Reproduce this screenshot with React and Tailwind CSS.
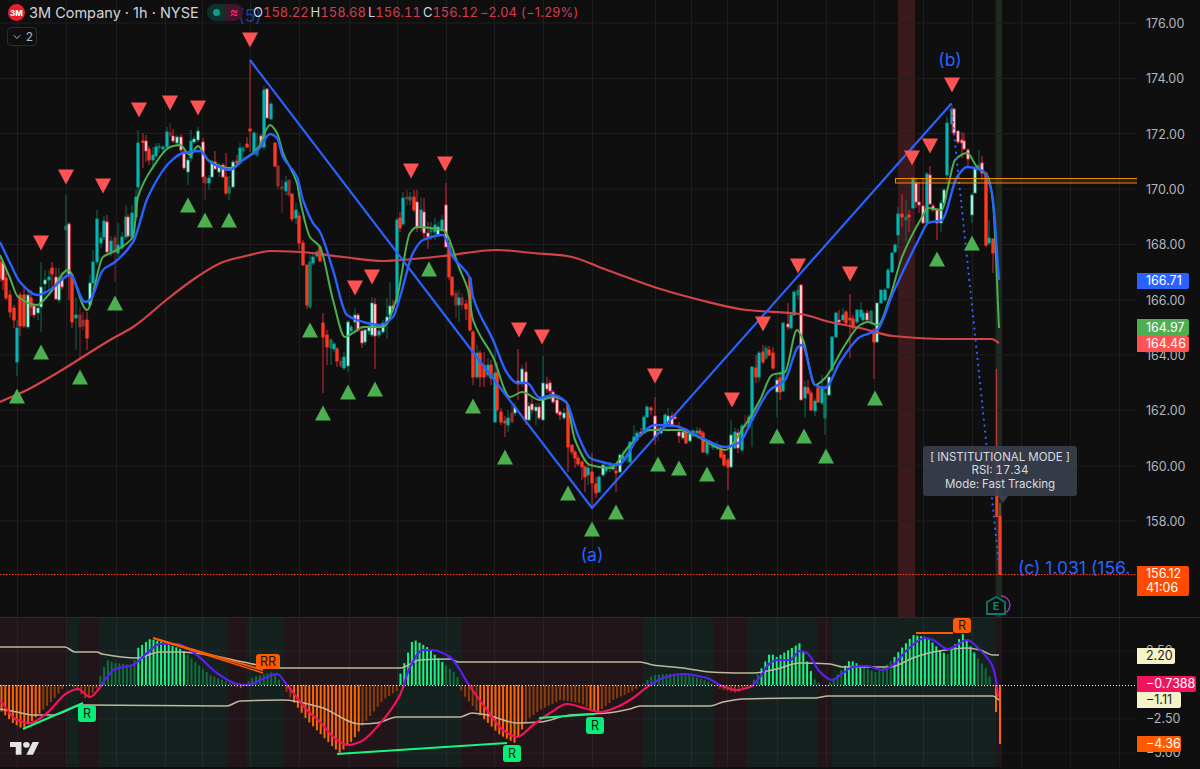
import React from 'react';
import { ChevronDown } from 'lucide-react';

// [x, wickTop, wickBottom, bodyTop, bodyBottom, type]
const candles = [
  [1,258,282,262,278,'r'],[3,260,290,263,280,'w'],[6,270,300,278,298,'r'],[10,290,318,295,312,'r'],[14,305,328,308,320,'r'],
  [17,320,376,328,362,'t'],[20,292,336,295,326,'r'],[24,286,328,295,326,'r'],[28,292,329,295,327,'m'],[31,290,316,298,307,'r'],
  [34,303,318,306,315,'w'],[38,305,320,308,313,'m'],[41,262,332,287,307,'m'],[45,270,296,280,284,'m'],[49,270,290,277,280,'t'],
  [52,262,292,268,274,'r'],[56,268,300,277,299,'w'],[59,268,303,278,300,'m'],[62,272,290,279,287,'w'],[66,195,275,226,230,'g'],
  [69,222,300,224,274,'w'],[72,275,328,275,322,'r'],[76,298,350,315,318,'t'],[80,307,358,315,327,'d'],[83,312,330,320,326,'d'],
  [87,312,350,320,338,'r'],[90,275,307,283,305,'m'],[93,250,290,262,283,'t'],[97,210,265,219,262,'t'],[101,232,248,238,243,'t'],
  [104,216,240,221,237,'t'],[107,215,253,222,252,'w'],[111,236,256,241,252,'t'],[115,235,282,238,252,'d'],[118,223,257,245,253,'t'],
  [122,232,250,237,248,'t'],[126,205,240,217,237,'t'],[128,214,238,217,236,'w'],[132,205,240,213,237,'t'],[136,190,220,197,217,'t'],
  [138,130,197,143,187,'t'],[143,133,168,141,142,'r'],[146,135,162,141,151,'w'],[149,146,165,149,160,'r'],[153,147,170,155,160,'t'],
  [156,143,158,147,156,'t'],[159,143,153,146,148,'g'],[163,145,152,147,149,'t'],[167,127,150,132,147,'t'],[170,123,137,133,135,'d'],
  [173,129,143,136,141,'w'],[177,135,147,137,143,'m'],[181,134,152,137,150,'w'],[184,150,170,152,168,'w'],[188,157,185,160,172,'m'],
  [191,130,162,141,158,'t'],[194,136,144,139,142,'m'],[198,127,142,131,140,'m'],[203,138,183,142,177,'w'],[205,177,200,177,183,'d'],
  [209,175,190,178,183,'t'],[212,160,178,163,177,'m'],[215,151,170,162,169,'w'],[219,163,177,166,172,'m'],[223,163,178,165,177,'w'],
  [226,153,195,177,193,'r'],[229,176,200,187,193,'g'],[233,160,188,162,187,'m'],[237,155,164,161,163,'r'],[240,143,164,148,163,'t'],
  [243,146,160,148,151,'g'],[247,137,148,144,147,'r'],[250,60,152,129,131,'r'],[254,131,154,133,154,'t'],[257,133,157,148,155,'g'],
  [261,134,148,136,147,'w'],[264,86,150,90,147,'t'],[267,88,118,89,118,'w'],[271,102,120,104,119,'t'],[275,143,167,143,166,'r'],
  [278,166,190,166,186,'d'],[282,180,213,187,189,'d'],[286,176,195,182,191,'t'],[289,180,197,180,195,'d'],[292,194,222,194,219,'r'],
  [296,203,224,210,218,'t'],[299,212,250,216,243,'r'],[303,240,266,243,265,'r'],[307,265,309,265,305,'r'],[310,255,309,262,307,'g'],
  [313,252,265,257,263,'t'],[317,250,258,252,256,'t'],[320,245,262,247,261,'r'],[323,313,393,323,337,'r'],[327,330,365,335,347,'r'],
  [331,338,365,340,348,'g'],[334,342,352,344,349,'t'],[337,347,367,349,361,'r'],[341,358,368,361,366,'d'],[344,352,370,357,368,'t'],
  [348,320,372,322,366,'m'],[351,325,334,327,331,'t'],[355,308,330,315,322,'m'],[358,313,332,315,330,'w'],[362,327,348,331,343,'w'],
  [365,328,345,330,342,'m'],[369,322,335,327,331,'m'],[372,297,337,303,335,'m'],[375,298,369,304,336,'w'],[379,325,338,331,335,'t'],
  [383,320,334,323,332,'m'],[387,298,339,317,323,'m'],[390,282,317,306,315,'m'],[393,300,312,306,309,'w'],[397,218,304,220,303,'t'],
  [400,212,232,218,228,'r'],[403,192,226,198,224,'t'],[407,190,205,197,199,'d'],[410,192,205,197,200,'g'],[414,190,212,197,210,'r'],
  [417,190,232,202,228,'w'],[421,197,232,210,227,'t'],[424,198,238,212,233,'w'],[428,222,249,233,237,'w'],[431,222,240,228,232,'g'],
  [435,218,240,225,232,'t'],[438,222,237,227,235,'m'],[442,215,232,220,230,'t'],[446,183,247,205,247,'w'],[449,243,280,243,277,'r'],
  [452,277,297,277,295,'r'],[456,290,318,293,305,'d'],[459,290,322,298,305,'t'],[462,293,310,298,305,'d'],[466,300,320,304,309,'r'],
  [470,278,332,278,330,'r'],[473,330,385,332,377,'r'],[477,345,379,353,377,'t'],[480,350,387,353,377,'r'],[484,352,387,365,377,'r'],
  [488,358,378,365,375,'t'],[491,360,385,365,378,'r'],[495,350,423,373,422,'t'],[497,362,412,373,410,'r'],[501,408,425,412,422,'r'],
  [505,416,437,421,423,'r'],[508,410,432,418,425,'t'],[512,405,423,413,422,'d'],[515,403,416,407,413,'m'],[518,349,400,381,384,'w'],
  [522,365,387,369,383,'m'],[526,362,425,372,420,'w'],[529,402,421,406,420,'m'],[532,396,414,404,410,'w'],[536,403,425,407,411,'m'],
  [539,403,420,407,418,'w'],[543,356,420,383,420,'m'],[547,377,393,384,389,'w'],[550,380,400,383,391,'w'],[553,390,404,392,402,'w'],
  [557,398,415,400,413,'w'],[560,410,420,412,415,'w'],[564,408,420,413,418,'m'],[568,405,472,405,447,'r'],[572,445,455,445,452,'r'],
  [575,450,468,452,458,'r'],[578,455,466,458,464,'r'],[582,460,480,462,467,'r'],[585,465,492,467,477,'r'],[588,463,485,468,475,'t'],
  [592,453,508,472,483,'r'],[596,477,498,484,493,'r'],[599,475,493,477,492,'t'],[603,462,477,465,475,'m'],[606,464,474,467,471,'t'],
  [610,462,472,465,468,'g'],[613,464,471,466,469,'m'],[616,465,492,471,473,'r'],[620,453,473,455,472,'m'],[623,450,462,456,459,'t'],
  [627,448,463,454,457,'g'],[630,442,463,442,462,'t'],[634,425,443,437,442,'t'],[637,430,442,433,440,'t'],[641,428,437,432,435,'w'],
  [644,415,434,417,433,'t'],[647,405,418,407,417,'t'],[651,406,415,408,410,'r'],[655,397,445,416,437,'w'],[658,425,441,428,430,'d'],
  [661,424,435,428,433,'m'],[665,413,430,415,427,'t'],[668,408,425,416,424,'m'],[672,412,426,416,425,'w'],[675,413,420,417,418,'w'],
  [679,422,443,432,436,'w'],[683,428,440,432,438,'m'],[686,428,444,431,443,'r'],[690,432,443,434,441,'m'],[693,429,438,431,435,'t'],
  [697,427,436,431,433,'t'],[700,428,437,431,434,'r'],[703,431,453,433,452,'r'],[707,440,455,443,453,'t'],[710,440,448,443,445,'d'],
  [713,442,450,446,447,'g'],[717,441,450,445,447,'t'],[721,445,459,447,457,'r'],[724,452,467,455,465,'r'],[728,458,490,460,467,'r'],
  [731,420,468,435,467,'m'],[735,428,449,432,448,'t'],[738,429,453,433,448,'w'],[742,424,452,426,450,'t'],[745,415,434,425,427,'d'],
  [749,414,429,417,427,'t'],[752,366,447,367,420,'t'],[756,355,383,368,377,'r'],[759,351,382,353,377,'t'],[763,345,364,352,362,'r'],
  [766,345,360,348,358,'g'],[769,346,356,350,355,'r'],[773,347,370,353,368,'r'],[777,375,417,380,392,'m'],[780,373,400,378,392,'r'],
  [783,323,392,323,391,'t'],[788,303,330,324,327,'w'],[791,312,329,315,328,'t'],[794,290,316,292,315,'t'],[798,285,300,290,295,'g'],
  [801,284,400,285,400,'w'],[805,381,417,387,398,'t'],[808,380,395,388,393,'r'],[811,390,411,393,410,'r'],[815,398,416,401,411,'t'],
  [818,385,403,388,402,'r'],[822,375,405,387,403,'t'],[825,385,435,393,418,'g'],[829,370,396,377,395,'m'],[832,336,372,337,370,'t'],
  [836,312,338,313,337,'t'],[839,310,325,320,322,'w'],[843,308,322,315,320,'t'],[846,310,325,312,323,'r'],[850,294,358,318,320,'r'],
  [853,315,330,319,328,'r'],[857,309,324,310,322,'t'],[861,302,319,310,317,'t'],[863,310,325,313,320,'t'],[867,310,322,313,320,'w'],
  [871,310,325,311,323,'g'],[874,328,379,330,342,'r'],[877,303,343,303,342,'m'],[881,290,304,290,303,'t'],[885,288,302,290,300,'t'],
  [888,268,289,270,288,'t'],[892,252,273,253,272,'t'],[895,243,253,245,252,'t'],[898,207,248,214,235,'t'],[902,194,227,214,217,'r'],
  [906,200,242,217,220,'g'],[909,210,232,215,217,'r'],[913,178,209,178,208,'t'],[916,179,208,183,202,'w'],[919,182,213,202,205,'w'],
  [923,178,224,206,223,'w'],[927,172,224,174,223,'t'],[930,166,205,175,204,'w'],[933,204,212,206,210,'w'],[937,209,240,210,223,'w'],
  [941,200,232,203,223,'m'],[944,188,204,190,203,'m'],[947,117,183,123,175,'t'],[952,105,133,109,124,'t'],[954,108,134,109,133,'w'],
  [958,130,144,131,142,'w'],[962,132,158,140,143,'w'],[964,133,150,141,149,'w'],[968,148,167,150,159,'w'],[972,193,223,195,215,'m'],
  [975,168,194,169,193,'m'],[979,150,170,165,168,'g'],[982,156,180,163,173,'w'],[986,172,247,173,245,'R'],[989,220,245,238,243,'t'],
  [993,238,273,239,253,'r'],
];

const bodyStyle = {
  t: ['#00bcc8', '#0a9a88', '#0d6b55'],
  g: ['#0c7a62', '#0c7a62', '#0d6b55'],
  m: ['#d8fff0', '#0f9a7c', '#0d6b55'],
  r: ['#ff3a22', '#ff3a22', '#d8283c'],
  R: ['#ff3a22', '#ff3a22', '#ff3a22'],
  w: ['#fff0f2', '#f5304c', '#d8283c'],
  d: ['#8f2f2b', '#8f2f2b', '#7a2530'],
};

const blueLine = [[0,242],[10,263],[20,282],[37,295],[50,290],[70,275],[85,302],[90,300],[103,270],[115,262],[133,242],[148,197],[170,162],[183,153],[200,151],[210,162],[230,170],[243,160],[258,150],[270,134],[277,138],[283,157],[297,177],[303,200],[313,223],[320,232],[333,270],[347,315],[367,323],[380,325],[393,317],[400,297],[413,253],[423,240],[443,235],[453,257],[470,278],[473,297],[493,340],[507,373],[517,383],[527,383],[540,398],[553,395],[566,402],[578,435],[590,458],[602,462],[618,465],[640,435],[655,425],[675,426],[700,437],[725,447],[740,442],[752,420],[770,390],[785,380],[798,347],[802,345],[815,385],[825,388],[840,362],[860,337],[877,330],[893,293],[920,237],[928,223],[942,220],[957,177],[967,167],[983,171],[992,193],[999,280]];
const greenLine = [[0,255],[10,278],[18,297],[37,305],[50,293],[68,270],[87,310],[103,257],[113,252],[133,237],[138,197],[153,167],[170,147],[180,145],[190,155],[198,146],[208,160],[230,168],[243,160],[258,148],[270,125],[277,133],[283,153],[297,183],[300,200],[310,237],[320,247],[333,300],[345,337],[353,333],[363,327],[383,327],[397,297],[410,233],[417,227],[443,230],[460,270],[468,290],[473,320],[493,357],[510,397],[522,392],[540,400],[553,397],[566,402],[575,440],[590,465],[610,468],[630,445],[650,430],[680,430],[700,438],[725,450],[745,425],[760,400],[772,375],[785,372],[797,330],[803,340],[815,385],[825,378],[845,345],[860,325],[868,322],[878,325],[890,297],[902,257],[922,217],[928,208],[942,210],[948,187],[955,160],[967,153],[977,167],[988,177],[993,203],[999,328]];
const redLine = [[0,402],[27,390],[57,373],[110,340],[133,327],[170,297],[197,277],[223,262],[250,255],[270,251],[300,252],[343,257],[383,261],[400,260],[443,256],[497,250],[533,253],[567,256],[607,270],[657,288],[700,300],[747,310],[800,314],[830,322],[860,328],[893,336],[943,339],[992,339],[999,343]];

const sells = [[250,40],[139,110],[170,103],[198,108],[66,177],[103,186],[41,243],[411,171],[445,164],[355,288],[372,277],[519,330],[542,337],[655,376],[732,400],[798,266],[763,324],[850,274],[912,158],[930,146],[952,85]];
const buys = [[17,396],[41,352],[80,377],[115,303],[310,330],[188,205],[205,220],[229,220],[429,269],[323,413],[348,392],[375,389],[473,406],[505,457],[568,493],[592,529],[616,512],[658,464],[679,468],[707,474],[728,512],[777,436],[804,436],[826,456],[875,398],[937,259],[972,243]];

const priceGridY = [23,78.5,133.5,189,244.5,300,355,410,466,521];
const gridX = [17,66,116,165,202,250,299,349,397,446,494,543,592,655,691,727,777,826,874,923,972,1021,1070,1119];
const priceTicks = ['176.00','174.00','172.00','170.00','168.00','166.00','164.00','162.00','160.00','158.00'];

// histogram height per x, positive goes up from the zero line
const amp = [[0,-25],[13,-38],[23,-44],[33,-35],[43,-25],[53,-15],[63,-3],[66,0],[70,1],[80,-8],[87,-15],[97,-3],[100,8],[107,25],[115,22],[133,20],[138,37],[150,46],[163,43],[183,35],[193,25],[210,10],[233,1],[240,-4],[253,8],[273,13],[283,0],[287,-8],[307,-35],[333,-62],[340,-68],[353,-55],[363,-40],[383,-15],[398,-5],[400,10],[413,46],[427,38],[440,25],[457,10],[462,-8],[480,-30],[500,-50],[515,-58],[527,-35],[540,-25],[560,-15],[580,-18],[597,-28],[613,-15],[633,-6],[643,1],[653,10],[683,12],[710,3],[720,-4],[737,-8],[750,0],[760,14],[770,32],[777,28],[800,42],[810,16],[815,5],[825,-2],[837,10],[850,25],[860,20],[877,12],[892,25],[900,35],[913,50],[927,48],[940,35],[947,30],[963,51],[977,28],[987,15],[994,-3]];
const brightBars = [[0,42],[136,186],[293,360],[400,445],[480,523],[590,600],[760,812],[843,862],[892,944],[950,976]];

const bandFill = { g: '#14211e', m: '#21151a' };
const lowerBands = [[0,68,'m'],[68,79,'g'],[79,99,'m'],[99,228,'g'],[228,247,'m'],[247,284,'g'],[284,397,'m'],[397,462,'g'],[462,643,'m'],[643,713,'g'],[713,747,'m'],[747,817,'g'],[817,832,'m'],[832,996,'g'],[996,1002,'m']];

const upperBand = [[0,647],[65,647],[75,652],[97,652],[102,654],[137,658],[160,652],[180,652],[215,656],[243,662],[280,668],[400,668],[420,660],[450,659],[458,662],[640,662],[653,665],[683,668],[710,672],[743,673],[753,673],[777,669],[800,663],[830,664],[843,667],[890,667],[913,658],[933,652],[967,648],[980,650],[993,655],[999,655]];
const lowerBand = [[0,709],[17,712],[33,715],[53,715],[83,705],[227,706],[240,701],[283,700],[320,707],[360,724],[377,723],[397,717],[460,717],[472,713],[487,715],[517,723],[540,722],[570,715],[607,713],[630,709],[640,706],[710,706],[723,702],[743,699],[800,698],[815,698],[828,696],[993,696],[999,700]];
const signal = [[0,700],[17,720],[30,723],[47,713],[67,693],[78,689],[90,697],[98,690],[107,677],[115,669],[133,665],[147,653],[160,644],[177,644],[193,652],[217,673],[237,684],[247,685],[267,677],[277,674],[287,685],[307,710],[320,722],[337,740],[348,745],[360,742],[383,720],[400,695],[410,667],[423,650],[433,650],[450,657],[460,670],[467,682],[487,710],[503,730],[517,737],[533,725],[550,713],[567,704],[587,709],[600,712],[617,707],[633,698],[650,685],[663,678],[683,674],[707,678],[720,685],[737,690],[750,687],[760,677],[770,663],[777,660],[790,660],[800,651],[807,653],[820,672],[832,680],[843,673],[853,667],[867,666],[882,670],[893,665],[907,650],[925,638],[933,640],[948,649],[967,640],[980,650],[992,665],[996,680],[998,697]];

// monotone cubic through points sorted by x, so a traced line never overshoots
const smooth = (pts) => {
  const sec = pts.slice(1).map((p, i) => (p[1] - pts[i][1]) / (p[0] - pts[i][0]));
  const slope = pts.map((_, i) => {
    if (i === 0) return sec[0];
    if (i === pts.length - 1) return sec[i - 1];
    if (sec[i - 1] * sec[i] <= 0) return 0;
    return (2 * sec[i - 1] * sec[i]) / (sec[i - 1] + sec[i]);
  });
  let d = `M${pts[0][0]} ${pts[0][1]}`;
  for (let i = 0; i < pts.length - 1; i++) {
    const h = (pts[i + 1][0] - pts[i][0]) / 3;
    d += `C${pts[i][0] + h} ${(pts[i][1] + h * slope[i]).toFixed(1)} ${pts[i + 1][0] - h} ${(pts[i + 1][1] - h * slope[i + 1]).toFixed(1)} ${pts[i + 1][0]} ${pts[i + 1][1]}`;
  }
  return d;
};

const interp = (pts, x) => {
  for (let i = 0; i < pts.length - 1; i++) {
    if (x >= pts[i][0] && x <= pts[i + 1][0]) {
      const t = (x - pts[i][0]) / (pts[i + 1][0] - pts[i][0]);
      return pts[i][1] + (pts[i + 1][1] - pts[i][1]) * t;
    }
  }
  return 0;
};

const bars = [];
for (let x = 1.5; x < 994; x += 3.8) {
  const a = interp(amp, x);
  const bright = brightBars.some(([s, e]) => x >= s && x <= e);
  bars.push({ x, a, fill: a >= 0 ? (bright ? '#19f585' : '#0f6e3c') : (bright ? '#ff6600' : '#8a3d0b') });
}

const PriceChart = () => (
  <svg width="1137" height="617" viewBox="0 0 1137 617" className="block">
    <rect x="898" y="0" width="17" height="617" fill="#3a1a1c" />
    <rect x="995.5" y="0" width="6.5" height="617" fill="#1c2a20" />
    {gridX.map((x) => <line key={x} x1={x + 0.5} x2={x + 0.5} y1="0" y2="617" stroke="#1e1e1e" />)}
    {priceGridY.map((y) => <line key={y} x1="0" x2="1137" y1={y} y2={y} stroke="#1e1e1e" />)}

    {candles.map(([x, wt, wb, bt, bb, k]) => {
      const [fill, edge, wick] = bodyStyle[k];
      return (
        <g key={x}>
          <line x1={x} x2={x} y1={wt} y2={wb} stroke={wick} strokeWidth="1" />
          <rect x={x - 1.2} y={bt} width="2.4" height={Math.max(bb - bt, 1.5)} fill={fill} stroke={edge} strokeWidth="0.8" />
        </g>
      );
    })}
    {/* last two candles run under the tooltip */}
    <line x1="996.5" x2="996.5" y1="369" y2="490" stroke="#b8303a" strokeWidth="1.5" />
    <rect x="995.3" y="478" width="3" height="39" fill="#ff3a22" />
    <line x1="1000" x2="1000" y1="503" y2="517" stroke="#8a7a3a" />
    <rect x="998.4" y="516" width="3.2" height="59" fill="#ff3a22" />

    <path d={smooth(redLine)} fill="none" stroke="#d4434a" strokeWidth="2.2" />
    <path d={smooth(greenLine)} fill="none" stroke="#4caf50" strokeWidth="2" />
    <path d={smooth(blueLine)} fill="none" stroke="#2962ff" strokeWidth="2.4" />
    <polyline points="250,60 592,508 951,104" fill="none" stroke="#2962ff" strokeWidth="2.2" />
    <line x1="951" y1="104" x2="1000" y2="575" stroke="#2962ff" strokeWidth="2.2" strokeLinecap="round" strokeDasharray="0.1 6" />

    <rect x="895.5" y="178.5" width="242" height="4.5" fill="#f08c00" fillOpacity="0.12" stroke="#f08c00" />
    <line x1="0" x2="1137" y1="574.5" y2="574.5" stroke="#ff3d1f" strokeDasharray="1.5 1.5" />

    {sells.map(([x, y]) => <polygon key={x} points={`${x - 8},${y - 7.5} ${x + 8},${y - 7.5} ${x},${y + 7.5}`} fill="#ff5252" />)}
    {buys.map(([x, y]) => <polygon key={x} points={`${x - 8},${y + 7.5} ${x + 8},${y + 7.5} ${x},${y - 7.5}`} fill="#4caf50" />)}

    <text x="250" y="22" textAnchor="middle" fontSize="17.5" fill="#2962ff" fillOpacity="0.55">(5)</text>
    <text x="592" y="561" textAnchor="middle" fontSize="17.5" fill="#2962ff">(a)</text>
    <text x="950" y="66" textAnchor="middle" fontSize="17.5" fill="#2962ff">(b)</text>
    <text x="1018" y="574" fontSize="17.5" fill="#2962ff">(c) 1.031 (156.</text>

    <path d="M1001 596A9 9 0 0 1 1001 614" fill="none" stroke="#a040c0" strokeWidth="1.3" />
    <polygon points="996,597 1005,602 1005,614 987,614 987,602" fill="#0f0f0f" stroke="#0d7a6c" strokeWidth="1.8" />
    <text x="996" y="610" textAnchor="middle" fontSize="11" fontWeight="600" fill="#0d8a78">E</text>
  </svg>
);

const Flag = ({ x, y, w, h, fill, label }) => (
  <g>
    <rect x={x} y={y} width={w} height={h} rx="3" fill={fill} />
    <text x={x + w / 2} y={y + h / 2 + 4.5} textAnchor="middle" fontSize="12.5" fill="#141414">{label}</text>
  </g>
);

const IndicatorChart = () => (
  <svg width="1137" height="151" viewBox="0 618 1137 151" className="block">
    <defs>
      <linearGradient id="sig" gradientUnits="userSpaceOnUse" x1="0" x2="0" y1="618" y2="769">
        <stop offset="0.444" stopColor="#5a1ff0" />
        <stop offset="0.444" stopColor="#f0145a" />
      </linearGradient>
    </defs>
    {lowerBands.map(([a, b, k]) => <rect key={a} x={a} y="618" width={b - a} height="149" fill={bandFill[k]} />)}
    {gridX.map((x) => <line key={x} x1={x + 0.5} x2={x + 0.5} y1="618" y2="767" stroke="#ffffff" strokeOpacity="0.05" />)}
    {[651, 719, 753].map((y) => <line key={y} x1="0" x2="1137" y1={y} y2={y} stroke="#ffffff" strokeOpacity="0.05" />)}

    {bars.map(({ x, a, fill }) => (
      <rect key={x} x={x - 1} y={a >= 0 ? 685 - a : 685} width="2" height={Math.abs(a)} fill={fill} />
    ))}
    <rect x="995" y="685" width="2" height="27" fill="#ff6600" />
    <rect x="999" y="685" width="2" height="59" fill="#ff6600" />

    <path d={smooth(upperBand)} fill="none" stroke="#bdb89f" strokeWidth="1.6" />
    <path d={smooth(lowerBand)} fill="none" stroke="#bdb89f" strokeWidth="1.6" />
    <path d={smooth(signal)} fill="none" stroke="url(#sig)" strokeWidth="2.2" />
    <line x1="0" x2="1137" y1="685.5" y2="685.5" stroke="#ffffff" strokeDasharray="1 2" />

    <line x1="23" y1="729" x2="83" y2="703" stroke="#19f585" strokeWidth="2" />
    <line x1="337" y1="754" x2="507" y2="743" stroke="#19f585" strokeWidth="2" />
    <line x1="539" y1="718" x2="595" y2="714" stroke="#19f585" strokeWidth="2" />
    <line x1="153" y1="638" x2="263" y2="670" stroke="#ff5a00" strokeWidth="2" />
    <line x1="153" y1="638" x2="263" y2="673" stroke="#ff5a00" strokeWidth="1.5" />
    <line x1="916" y1="633" x2="953" y2="633" stroke="#ff5a00" strokeWidth="2" />

    <Flag x={78} y={705} w={18} h={17} fill="#05ee78" label="R" />
    <Flag x={503} y={745} w={18} h={17} fill="#05ee78" label="R" />
    <Flag x={586} y={717} w={18} h={17} fill="#05ee78" label="R" />
    <Flag x={256} y={654} w={24} h={15} fill="#ff5a00" label="RR" />
    <Flag x={953} y={618} w={18} h={15} fill="#ff5a00" label="R" />

    <g transform="translate(10 739) scale(0.82 0.72)" fill="#e4e4e4">
      <path d="M14 22H7V11H0V4h14v18zM28 22h-8l7.5-18h8L28 22z" />
      <circle cx="20" cy="8" r="4" />
    </g>
  </svg>
);

const PriceBadge = ({ className, children }) => (
  <div className={`absolute left-0 flex pl-[9px] rounded-r-[2px] text-[12.5px] ${className}`}>{children}</div>
);

export default function App() {
  return (
    <div className="w-[1200px] h-[769px] overflow-hidden bg-[#0f0f0f] text-[#b2b5be] font-['Inter','Liberation_Sans',sans-serif]">
      <div className="flex h-[617px]">
        <div className="relative w-[1137px]">
          <PriceChart />

          <div className="absolute left-2 top-1 flex items-center h-[17px]">
            <div className="w-[17px] h-[17px] rounded-full bg-[#ec1c2e] flex items-center justify-center text-[8px] font-extrabold text-white">3M</div>
            <span className="ml-[4px] w-[169px] whitespace-nowrap text-[14.5px] text-[#d1d4dc]">3M Company · 1h · NYSE</span>
            <div className="ml-[9px] flex h-[17px] w-[36px] rounded-full overflow-hidden">
              <div className="flex-1 bg-[#11302c] flex items-center justify-center">
                <div className="w-[7px] h-[7px] rounded-full bg-[#0d9d86]" />
              </div>
              <div className="flex-1 bg-[#45142a] flex items-center justify-center text-[13px] leading-none text-[#f23670]">≈</div>
            </div>
            <div className="ml-[10px] flex items-center gap-[2px] text-[13px] tabular-nums text-[#d93a4c]">
              <span><span className="text-[#d1d4dc]">O</span>158.22</span>
              <span><span className="text-[#d1d4dc]">H</span>158.68</span>
              <span><span className="text-[#d1d4dc]">L</span>156.11</span>
              <span><span className="text-[#d1d4dc]">C</span>156.12</span>
              <span className="normal-nums tracking-[0.2px]">−2.04 (−1.29%)</span>
            </div>
          </div>

          <div className="absolute left-[7px] top-[27px] flex items-center justify-center gap-[3px] w-[30px] h-[19px] rounded-[4px] border border-[#2a2d33] bg-[#0f0f0f] text-[12px] text-[#b2b5be]">
            <ChevronDown size={12} strokeWidth={2} />
            <span>2</span>
          </div>

          <div className="absolute left-[923px] top-[446px] w-[154px] h-[50px] rounded-[3px] bg-[#3a404c]/90 text-[11.5px] leading-[13.5px] tabular-nums text-[#d8dbe2] flex flex-col items-center justify-center">
            <span>[ INSTITUTIONAL MODE ]</span>
            <span>RSI: 17.34</span>
            <span>Mode: Fast Tracking</span>
            <div className="absolute left-[75px] top-full w-0 h-0 border-x-[5px] border-t-[7px] border-x-transparent border-t-[#3a404c]" />
          </div>
        </div>

        <div className="relative w-[63px] pt-[16px] flex flex-col gap-[39.33px] pl-[9px] text-[12.5px]">
          {priceTicks.map((t) => <div key={t} className="h-4 leading-4">{t}</div>)}
          <PriceBadge className="top-[273px] w-[52px] h-4 leading-4 bg-[#2962ff] text-white">166.71</PriceBadge>
          <PriceBadge className="top-[319px] w-[52px] h-[17px] leading-[17px] bg-[#4caf50] text-white">164.97</PriceBadge>
          <PriceBadge className="top-[336px] w-[52px] h-4 leading-4 bg-[#ff5252] text-white">164.46</PriceBadge>
          <PriceBadge className="top-[566px] w-[52px] h-[30px] justify-center bg-[#ff4a00] text-white flex-col leading-[14.5px]">
            <span>156.12</span>
            <span>41:06</span>
          </PriceBadge>
        </div>
      </div>

      <div className="flex border-t border-[#2a2a2c]">
        <div className="w-[1137px]">
          <IndicatorChart />
        </div>
        <div className="relative w-[63px] h-[151px] pt-[25px] flex flex-col gap-[18px] pl-[9px] text-[12.5px]">
          {['2.50', '0.00', '−2.50', '−5.00'].map((t) => <div key={t} className="h-4 leading-4">{t}</div>)}
          <PriceBadge className="top-[30px] w-[38px] h-4 leading-4 bg-[#f5f3c8] text-[#1a1a1a]">2.20</PriceBadge>
          <PriceBadge className="top-[58px] w-[59px] h-4 leading-4 bg-[#f0145f] text-white">−0.7388</PriceBadge>
          <PriceBadge className="top-[74px] w-[44px] h-4 leading-4 bg-[#f5f3c8] text-[#1a1a1a]">−1.11</PriceBadge>
          <PriceBadge className="top-[118px] w-[44px] h-4 leading-4 bg-[#ff5a00] text-white">−4.36</PriceBadge>
        </div>
      </div>
    </div>
  );
}
